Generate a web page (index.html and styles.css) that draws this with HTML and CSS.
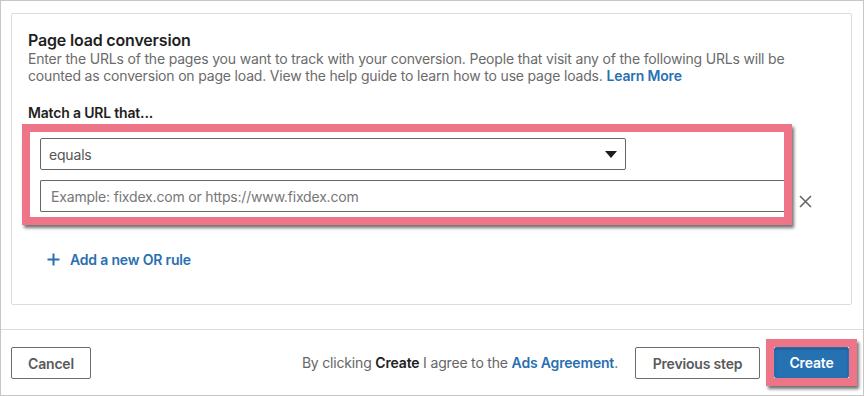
FILE: index.html
```html
<!DOCTYPE html>
<html>
<head>
<meta charset="utf-8">
<link rel="stylesheet" href="styles.css">
</head>
<body>
<div class="frame">
  <section class="card">
    <h2 class="title">Page load conversion</h2>
    <p class="desc">Enter the URLs of the pages you want to track with your conversion. People that visit any of the following URLs will be<br>counted as conversion on page load. View the help guide to learn how to use page loads. <a class="link">Learn More</a></p>
    <div class="label">Match a URL that...</div>
    <div class="rule-row">
      <div class="highlight">
        <div class="rule-inner">
          <div class="select">
            <span>equals</span>
            <svg class="caret" width="12" height="7" viewBox="0 0 12 7"><path d="M0 0H12L6 7Z" fill="#1d1d1d"/></svg>
          </div>
          <div class="input">Example: fixdex.com or https://www.fixdex.com</div>
        </div>
      </div>
      <svg class="close" width="13" height="13" viewBox="0 0 13 13"><path d="M1 1L12 12M12 1L1 12" stroke="#666" stroke-width="1.6" fill="none"/></svg>
    </div>
    <div class="add-rule">
      <svg width="13" height="13" viewBox="0 0 13 13"><path d="M6.5 0.5V12.5M0.5 6.5H12.5" stroke="#2a6fb1" stroke-width="2" fill="none"/></svg>
      <span>Add a new OR rule</span>
    </div>
  </section>
  <footer class="footer">
    <button class="btn">Cancel</button>
    <div class="right">
      <span class="agree">By clicking <b>Create</b> I agree to the <a class="link">Ads Agreement</a>.</span>
      <button class="btn prev">Previous step</button>
      <div class="highlight small">
        <button class="btn primary">Create</button>
      </div>
    </div>
  </footer>
</div>
</body>
</html>
```

FILE: styles.css
```css
* { box-sizing: border-box; }
html, body { margin: 0; padding: 0; background: #fff; }
body {
  font-family: Inter, "Noto Sans", "Liberation Sans", sans-serif;
  font-size: 14px;
  letter-spacing: -0.18px;
  color: #222;
}
.frame {
  width: 864px;
  height: 396px;
  border: 1px solid #c6c6c6;
  padding-top: 12px;
}
.card {
  margin: 0 11px 0 10px;
  width: 841px;
  height: 292px;
  border: 1px solid #dcdcdc;
  border-radius: 2px;
  padding: 15px 16px 0 16px;
}
.title {
  margin: 0;
  font-size: 16px;
  font-weight: 600;
  line-height: 22px;
  color: #1f1f1f;
}
.desc {
  margin: 0;
  font-size: 14px;
  line-height: 16.5px;
  color: #6b6b6b;
  white-space: nowrap;
}
.link {
  color: #2a6fb1;
  font-weight: 600;
  text-decoration: none;
}
.label {
  margin-top: 20px;
  font-weight: 600;
  line-height: 18px;
  color: #1f1f1f;
}
.rule-row {
  display: flex;
  align-items: flex-end;
  margin-top: 2px;
}
.highlight {
  border: 8px solid #ee7588;
  box-shadow: 2px 3px 3px rgba(0,0,0,0.55);
  background: #fff;
}
.rule-row .highlight {
  margin-left: -6px;
  width: 770px;
}
.rule-inner {
  padding: 6px 0 5px 10px;
  overflow: hidden;
}
.select {
  width: 586px;
  height: 32px;
  border: 1px solid #666;
  border-radius: 2px;
  display: flex;
  align-items: center;
  justify-content: space-between;
  padding: 0 8px 0 8px;
  color: #555;
}
.input {
  margin-top: 10px;
  height: 32px;
  border: 1px solid #666;
  border-right: none;
  border-radius: 2px 0 0 2px;
  padding: 0 10px;
  display: flex;
  align-items: center;
  color: #777;
}
.close { margin-left: 7px; margin-bottom: 17px; }
.add-rule {
  display: flex;
  align-items: center;
  gap: 10px;
  margin-top: 26px;
  margin-left: 19px;
  color: #2a6fb1;
  font-weight: 600;
}
.footer {
  margin-top: 24px;
  border-top: 1px solid #dcdcdc;
  padding: 17px 6px 0 10px;
  display: flex;
  align-items: flex-start;
  justify-content: space-between;
}
.btn {
  font-family: inherit;
  font-size: 14px;
  font-weight: 600;
  letter-spacing: -0.18px;
  height: 32px;
  background: #fff;
  color: #5a5a5a;
  border: 1px solid #6b6b6b;
  border-radius: 2px;
  padding: 0;
  width: 80px;
  white-space: nowrap;
}
.right {
  display: flex;
  align-items: flex-start;
}
.agree {
  line-height: 32px;
  color: #666;
  margin-right: 17px;
}
.agree b { color: #222; font-weight: 600; }
.prev { width: 125px; }
.highlight.small {
  margin-top: -8px;
  margin-left: 6px;
}
.primary {
  display: block;
  width: 75px;
  height: 31px;
  background: #2571b2;
  border-color: #2571b2;
  color: #fff;
  box-shadow: inset 0 1px 2px rgba(0,0,0,0.25);
}
```
